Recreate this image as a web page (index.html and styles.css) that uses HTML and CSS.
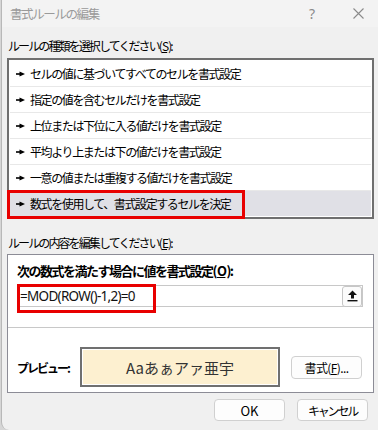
FILE: index.html
```html
<!DOCTYPE html>
<html lang="ja">
<head>
    <meta charset="UTF-8">
    <title>書式ルールの編集</title>
    <link rel="stylesheet" href="styles.css">
</head>
<body>
    <div class="window">
        <div class="titlebar">
            <span class="title">書式ルールの編集</span>
            <span class="help">?</span>
            <span class="close">
                <svg width="11" height="11" viewBox="0 0 11 11"><path d="M0.5 0.5 L10.5 10.5 M10.5 0.5 L0.5 10.5" stroke="#8a8a8a" stroke-width="1.1" fill="none"/></svg>
            </span>
        </div>

        <div class="content">
            <div class="label label-top">ルールの種類を選択してください(<u>S</u>):</div>
            <ul class="rule-list">
                <li><svg class="bullet" width="9" height="6" viewBox="0 0 9 6"><rect x="0" y="2.2" width="4" height="1.6"/><path d="M3.5 0.5 L9 3 L3.5 5.5 Z"/></svg>セルの値に基づいてすべてのセルを書式設定</li>
                <li><svg class="bullet" width="9" height="6" viewBox="0 0 9 6"><rect x="0" y="2.2" width="4" height="1.6"/><path d="M3.5 0.5 L9 3 L3.5 5.5 Z"/></svg>指定の値を含むセルだけを書式設定</li>
                <li><svg class="bullet" width="9" height="6" viewBox="0 0 9 6"><rect x="0" y="2.2" width="4" height="1.6"/><path d="M3.5 0.5 L9 3 L3.5 5.5 Z"/></svg>上位または下位に入る値だけを書式設定</li>
                <li><svg class="bullet" width="9" height="6" viewBox="0 0 9 6"><rect x="0" y="2.2" width="4" height="1.6"/><path d="M3.5 0.5 L9 3 L3.5 5.5 Z"/></svg>平均より上または下の値だけを書式設定</li>
                <li><svg class="bullet" width="9" height="6" viewBox="0 0 9 6"><rect x="0" y="2.2" width="4" height="1.6"/><path d="M3.5 0.5 L9 3 L3.5 5.5 Z"/></svg>一意の値または重複する値だけを書式設定</li>
                <li class="selected"><svg class="bullet" width="9" height="6" viewBox="0 0 9 6"><rect x="0" y="2.2" width="4" height="1.6"/><path d="M3.5 0.5 L9 3 L3.5 5.5 Z"/></svg>数式を使用して、書式設定するセルを決定<span class="mark mark-rule"></span></li>
            </ul>

            <div class="label label-edit">ルールの内容を編集してください(<u>E</u>):</div>
            <div class="edit-box">
                <div class="edit-head">
                    <div class="edit-title">次の数式を満たす場合に値を書式設定(<u>O</u>):</div>
                    <div class="formula">
                        <span class="formula-text">=MOD(ROW()-1,2)=0</span>
                        <span class="ref-btn">
                            <svg width="11" height="12" viewBox="0 0 11 12"><path d="M5.5 0.5 L10 5 L7 5 L7 8.5 L4 8.5 L4 5 L1 5 Z" fill="#111"/><rect x="0.5" y="10" width="10" height="1.4" fill="#111"/></svg>
                        </span>
                        <span class="mark mark-formula"></span>
                    </div>
                </div>
                <div class="sep"></div>
                <div class="preview-row">
                    <span class="preview-label">プレビュー:</span>
                    <div class="preview-box">
                        <div class="preview-fill">Aaあぁアァ亜宇</div>
                    </div>
                    <button class="btn btn-format">書式(<u>F</u>)...</button>
                </div>
            </div>

            <div class="actions">
                <button class="btn btn-ok">OK</button>
                <button class="btn btn-cancel">キャンセル</button>
            </div>
        </div>
    </div>
</body>
</html>
```

FILE: styles.css
```css
html, body {
    margin: 0;
    padding: 0;
}

body {
    background-color: #d6d6d6;
    font-family: "Noto Sans CJK JP", sans-serif;
    font-size: 12px;
    letter-spacing: -1.4px;
    color: #000000;
}

.window {
    width: 376px;
    height: 430px;
    margin-left: 1px;
    border-left: 1px solid #b8b8b8;
    border-bottom-left-radius: 8px;
    background-color: #f0f0f0;
    overflow: hidden;
}

.titlebar {
    height: 27px;
    display: flex;
    align-items: center;
    background-color: #f3f3f3;
    padding-left: 8px;
}

.title {
    color: #9a9a9a;
    font-size: 12.5px;
}

.help {
    margin-left: auto;
    width: 30px;
    margin-right: 11px;
    text-align: center;
    color: #8a8a8a;
    font-family: "Noto Sans", sans-serif;
    font-size: 14px;
    letter-spacing: 0;
}

.close {
    width: 40px;
    display: flex;
    justify-content: center;
    align-items: center;
}

.content {
    padding: 0 4px 0 5px;
}

.label {
    height: 18px;
    line-height: 18px;
    padding-left: 1px;
    letter-spacing: -1.9px;
    white-space: nowrap;
}

.label u {
    margin: 0 1px;
}

.label-top {
    margin-top: 10px;
    margin-bottom: 3px;
}

.label-edit {
    margin-top: 15px;
    margin-bottom: 2px;
}

.rule-list {
    list-style-type: none;
    margin: 0;
    padding: 1px 0;
    background-color: #ffffff;
    border: 2px solid #6f6f6f;
}

.rule-list li {
    position: relative;
    height: 25px;
    margin: 0 1px;
    padding-left: 6px;
    display: flex;
    align-items: center;
    border-bottom: 1px solid #e8e8e8;
    white-space: nowrap;
}

.rule-list li.selected {
    height: 25px;
    border-bottom: none;
    background-color: #e0e0e6;
}

.bullet {
    fill: #000000;
    margin-right: 5px;
    flex-shrink: 0;
}

.mark {
    position: absolute;
    border: 3px solid #e80000;
    box-sizing: border-box;
}

.mark-rule {
    left: -3px;
    top: -1px;
    bottom: -3px;
    width: 238px;
}

.edit-box {
    background-color: #ffffff;
    border: 1px solid #8c8c96;
}

.edit-head {
    padding: 7px 10px 20px 9px;
}

.edit-title {
    height: 18px;
    line-height: 18px;
    font-size: 13px;
    letter-spacing: -1.5px;
    font-weight: bold;
    white-space: nowrap;
}

.edit-title u {
    margin: 0 1px;
}

.formula {
    position: relative;
    margin-top: 5px;
    height: 22px;
    box-sizing: border-box;
    border: 1px solid #c8c8c8;
    display: flex;
    align-items: center;
}

.formula-text {
    padding-left: 2px;
    font-family: "Noto Sans", sans-serif;
    font-size: 13.5px;
    letter-spacing: -0.7px;
    color: #111111;
}

.ref-btn {
    margin-left: auto;
    width: 20px;
    height: 21px;
    box-sizing: border-box;
    border: 1px solid #c6c6c6;
    border-radius: 3px;
    background-color: #fbfbfb;
    display: flex;
    justify-content: center;
    align-items: center;
}

.mark-formula {
    left: -1px;
    top: -2px;
    width: 139px;
    height: 29px;
}

.sep {
    height: 1px;
    background-color: #c8c8c8;
}

.preview-row {
    display: flex;
    align-items: center;
    padding: 19px 0 5px 9px;
}

.preview-label {
    width: 63px;
    font-weight: bold;
    letter-spacing: -2px;
    white-space: nowrap;
}

.preview-box {
    width: 200px;
    height: 40px;
    box-sizing: border-box;
    border: 2px solid #707070;
    padding: 1px;
    background-color: #ffffff;
}

.preview-fill {
    height: 100%;
    background-color: #fdf0d0;
    display: flex;
    justify-content: center;
    align-items: center;
    font-size: 15px;
    letter-spacing: 0;
    color: #333333;
}

.btn {
    width: 71px;
    height: 22px;
    padding: 0;
    border: 1px solid #d0d0d0;
    border-radius: 4px;
    background-color: #fdfdfd;
    font-family: "Noto Sans CJK JP", sans-serif;
    font-size: 12px;
    letter-spacing: -1.4px;
    color: #000000;
}

.btn-ok {
    font-size: 13px;
    letter-spacing: 0;
}

.btn-cancel {
    letter-spacing: -2.2px;
}

.btn-format {
    margin-left: 11px;
    height: 23px;
    letter-spacing: -0.6px;
}

.actions {
    display: flex;
    justify-content: flex-end;
    gap: 12px;
    margin-top: 6px;
    padding-right: 6px;
}
```
